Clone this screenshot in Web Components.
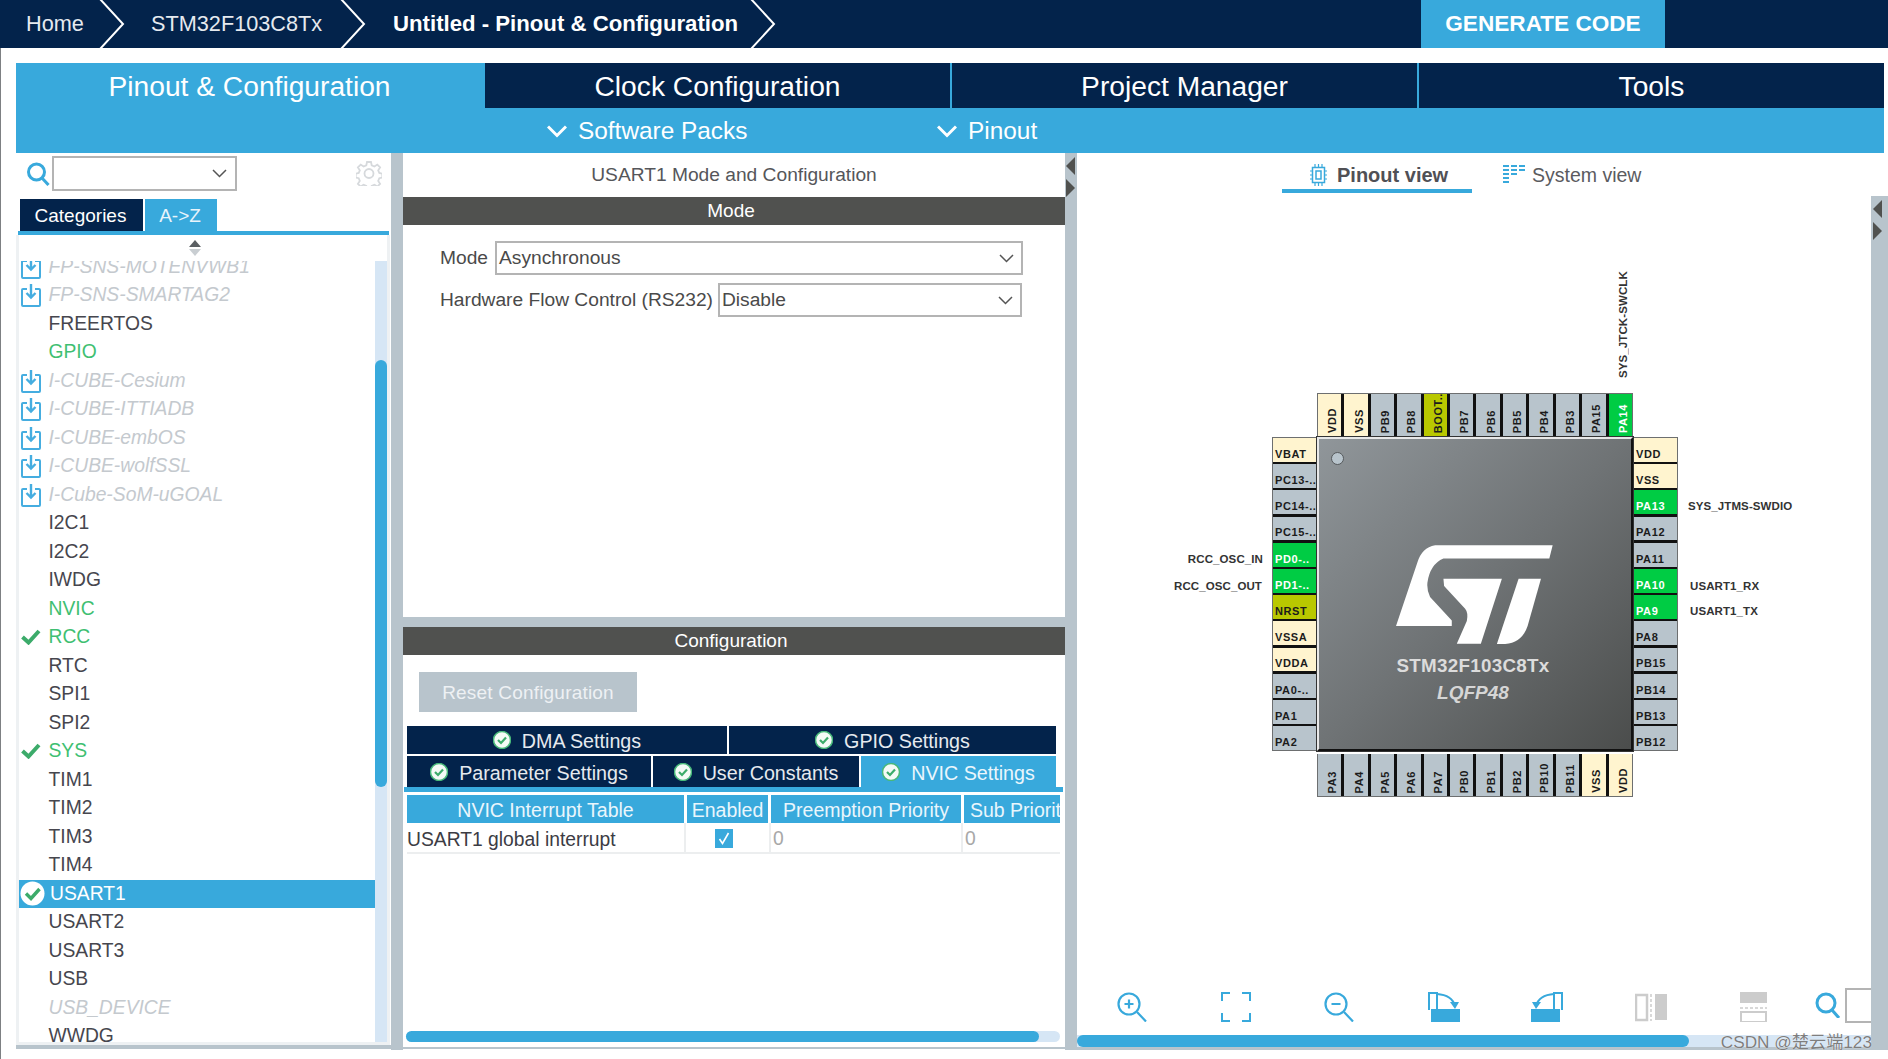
<!DOCTYPE html>
<html><head><meta charset="utf-8"><title>STM32CubeMX</title>
<style>
html,body{margin:0;padding:0;background:#fff;height:1059px;overflow:hidden;font-family:"Liberation Sans",Arial,sans-serif}
cube-app{display:block}
</style></head><body>
<cube-app></cube-app>
<script>
const BLUE='#38a9dc',NAVY='#03234b',GREY='#b8c4cc',DARK='#50514f';
function def(name,css,html){
  customElements.define(name,class extends HTMLElement{
    constructor(){super();const r=this.attachShadow({mode:'open'});
      const h=typeof html==='function'?html(this):html;
      r.innerHTML='<style>'+css+'</style>'+h;}
  });
}
const I={
 dl:`<svg width="20" height="24" viewBox="0 0 20 24" fill="none" stroke="#45ade0" stroke-width="2"><path d="M6 6H2a1 1 0 0 0-1 1v15a1 1 0 0 0 1 1h16a1 1 0 0 0 1-1V7a1 1 0 0 0-1-1h-4"/><path d="M10 1v13M5.500 10l4.500 4.500 4.500-4.500" stroke-width="2.400"/></svg>`,
 chk:`<svg width="20" height="16" viewBox="0 0 20 16" fill="none" stroke="#3cab6a" stroke-width="4"><path d="M1.500 8l6 5.500L18 2"/></svg>`,
 round:`<svg width="25" height="25" viewBox="0 0 25 25"><circle cx="12.500" cy="12.500" r="12" fill="#fff"/><path d="M6 12.500l5 5 8.500-9.500" fill="none" stroke="#3cab6a" stroke-width="3.400"/></svg>`,
 mini:`<svg width="18" height="18" viewBox="0 0 18 18"><circle cx="9" cy="9" r="8.500" fill="#f4faf6" stroke="#48b87a" stroke-width="1.500"/><path d="M5 9l3 3 5-5.500" fill="none" stroke="#3cab6a" stroke-width="2.200"/></svg>`,
 search:`<svg width="24" height="24" viewBox="0 0 24 24" fill="none" stroke="${BLUE}" stroke-width="3"><circle cx="10.500" cy="10" r="8"/><path d="M16 16l6.500 7"/></svg>`,
 gear:`<svg width="26" height="25" viewBox="0 0 26 25" fill="none" stroke="#d6d9dc" stroke-width="1.800"><circle cx="13" cy="12.500" r="4.500"/><path d="M11 1h4l.7 3.400 2.700 1.100 2.900-1.900 2.800 2.800-1.900 2.900 1.100 2.700 3 .7v3.800l-3 .7-1.100 2.700 1.900 2.900-2.800 2.800-2.900-1.900-2.700 1.100-.7 2.500h-4l-.7-2.500-2.700-1.100-2.900 1.900-2.800-2.800 1.900-2.900-1.100-2.700-3-.7v-3.800l3-.7 1.100-2.700-1.900-2.900 2.800-2.800 2.900 1.900 2.700-1.100z"/></svg>`,
 chev:`<svg width="20" height="13" viewBox="0 0 20 13" fill="none" stroke="#fff" stroke-width="3"><path d="M1 1.500l9 9 9-9"/></svg>`,
 dd:`<svg width="15" height="9" viewBox="0 0 15 9" fill="none" stroke="#555" stroke-width="1.500"><path d="M1 1l6.500 6.500L14 1"/></svg>`
};

def('cube-crumbs',`
:host{display:flex;height:48px;background:${NAVY};color:#e6eaef;font-size:21.700px;align-items:center;position:relative}
.c{position:relative;height:48px;display:flex;align-items:center;box-sizing:border-box}
svg{position:absolute;right:0;top:0}
.on{color:#fff;font-weight:bold;font-size:22.200px}
.gen{margin-left:auto;margin-right:223px;width:244px;height:48px;background:${BLUE};color:#fff;font-weight:bold;font-size:22.600px;display:flex;align-items:center;justify-content:center}
`,()=>{
 const ch=`<svg width="26" height="48" viewBox="0 0 26 48" fill="none" stroke="#fff" stroke-width="2"><path d="M1 -1L24 24 1 49"/></svg>`;
 return `<div class="c" style="width:125px;padding-left:26px">Home${ch}</div>
 <div class="c" style="width:241px;padding-left:26px">STM32F103C8Tx${ch}</div>
 <div class="c on" style="width:410px;padding-left:27px">Untitled - Pinout &amp; Configuration${ch}</div>
 <div class="gen">GENERATE CODE</div>`;});

def('cube-tabs',`
:host{display:block;margin:15px 4px 0 16px;background:${BLUE};height:90px;color:#fff}
.t{display:flex;height:45px;gap:2px;font-size:28.200px}
.t div{flex:1;display:flex;align-items:center;justify-content:center;background:${NAVY};padding-top:1px;box-sizing:border-box}
.t div.a{background:${BLUE};flex:none;width:467px}
.s{display:flex;height:45px;align-items:center;font-size:24.400px;padding:1px 0 0 531px;box-sizing:border-box}
.s span{display:flex;align-items:center;gap:11px}
`,`<div class="t"><div class="a">Pinout &amp; Configuration</div><div>Clock Configuration</div><div>Project Manager</div><div>Tools</div></div>
<div class="s"><span style="width:390px">${I.chev}Software Packs</span><span>${I.chev}Pinout</span></div>`);

def('ip-row',`
:host{display:flex;height:28.500px;align-items:center;position:relative;padding-left:29.500px;color:#46464e;font-size:19.300px;white-space:nowrap;flex:none}
:host([g]){color:#3fbf72}
:host([d]){color:#c4c9ce;font-style:italic}
:host([s]){background:${BLUE};color:#fff;padding-left:31px}
.i{position:absolute;left:2px;top:0;bottom:0;display:flex;align-items:center}
:host([s]) .i{left:1px}
`,e=>{const k=e.getAttribute('i');return (k?`<span class="i">${I[k]}</span>`:'')+'<slot></slot>';});

def('ip-list',`
:host{display:flex;flex-direction:column;width:375px;background:#fff}
.top{display:flex;height:46px;box-sizing:border-box;padding:3px 9px 0 10px}
.top .s{margin-top:6px}
.combo{margin-left:2px;width:185px;height:35px;box-sizing:border-box;border:2px solid #b4b4b4;display:flex;align-items:center;justify-content:flex-end;padding-right:8px}
.top .g{margin-left:auto;margin-top:5px}
.cat{display:flex;height:32px;margin-left:4px;gap:2px;color:#fff;font-size:19px}
.cat div{display:flex;align-items:center;justify-content:center;background:${NAVY};width:123px;padding:1px 2px 0 0;box-sizing:border-box}
.cat div+div{background:${BLUE};width:72px;color:#e8f4fb}
.line{margin-left:2px;width:371px;height:4px;background:${BLUE};flex:none}
.sort{height:26px;box-sizing:border-box;margin:0 1px 0 0;border-left:3px solid #eef1f3;border-right:3px solid #eef1f3;width:374px;display:flex;flex-direction:column;align-items:center;padding:5px 16px 0 0;gap:2px}
.sort i{display:block;width:0;height:0;border-left:6px solid transparent;border-right:6px solid transparent}
.sort i:first-child{border-bottom:7px solid #5a5f62}
.sort i:last-child{border-top:7px solid #c9ced2}
.body{display:flex;height:781px;width:374px;box-sizing:border-box;border-left:3px solid #eef1f3;border-right:3px solid #eef1f3}
.rows{flex:1;overflow:hidden;display:flex;flex-direction:column}
.inner{margin-top:-8.500px;display:flex;flex-direction:column}
.sb{width:12px;background:#d6e6f5;position:relative;display:flex;flex-direction:column;flex:none}
.sb b{display:block;margin-top:99px;height:427px;background:${BLUE};border-radius:6px}
.foot{height:3px;width:374px;background:#eef1f3}
.foot2{height:4px;background:${GREY};width:375px}
`,`<div class="top"><span class="s">${I.search}</span><div class="combo">${I.dd}</div><span class="g">${I.gear}</span></div>
<div class="cat"><div>Categories</div><div>A-&gt;Z</div></div>
<div class="line"></div>
<div class="sort"><i></i><i></i></div>
<div class="body"><div class="rows"><div class="inner"><slot></slot></div></div><div class="sb"><b></b></div></div>
<div class="foot"></div><div class="foot2"></div>`);

def('set-tab',`
:host{display:flex;align-items:center;justify-content:center;gap:11px;background:${NAVY};color:#e6eaef;font-size:19.700px;box-sizing:border-box;flex:none;padding:3px 0 0 0}
:host([a]){background:${BLUE};color:#eaf6fc}
svg{flex:none;margin-top:-3px}
`,`${I.mini}<slot></slot>`);

def('mode-panel',`
:host{display:flex;flex-direction:column;width:662px;height:897px;color:#4a4a4a;font-size:19.200px;background:#fff}
.title{height:44px;display:flex;align-items:center;justify-content:center;color:#55565a;font-size:19.200px}
.bar{height:28px;background:${DARK};color:#fff;display:flex;align-items:center;justify-content:center;font-size:19px;flex:none;box-sizing:border-box;padding:0 6px 0 0}
.upper{height:392px;padding:16px 0 0 37px;box-sizing:border-box}
.fr{display:flex;align-items:center;height:34px;margin-bottom:8px;white-space:nowrap}
.sel{margin-left:6px;height:34px;box-sizing:border-box;border:2px solid #b4b4b4;display:flex;align-items:center;justify-content:space-between;padding:0 7px 0 2px}
.split{height:10px;background:${GREY};flex:none}
.reset{margin:17px 0 0 16px;width:218px;height:40px;background:${GREY};color:#eef1f4;display:flex;align-items:center;justify-content:center;font-size:19px;letter-spacing:.2px;box-sizing:border-box;padding-top:2px}
.r1,.r2{display:flex;margin-left:4px;gap:2px}
.r1{margin-top:14px;height:28px}
.r2{margin-top:2px;height:31px}
.rule{height:5px;background:${BLUE};margin:0 2px 0 1px}
.head{display:flex;margin:3px 0 0 4px;height:28px;color:#eaf6fc;gap:3px;overflow:hidden;width:653px}
.head div{background:${BLUE};display:flex;align-items:center;justify-content:center;flex:none;white-space:nowrap;overflow:hidden;font-size:19.500px;box-sizing:border-box;padding-top:2px}
.row{display:flex;margin:0 0 0 4px;width:653px;height:31px;border-bottom:2px solid #eceeef;box-sizing:border-box;color:#3c3c44;font-size:19.300px;align-items:stretch}
.row div{flex:none;display:flex;align-items:center;border-right:2px solid #eceeef;box-sizing:border-box;color:#a8a8a8;padding:3px 0 0 2px}
.row div:first-child{color:#3c3c44;padding:4px 0 0 0}
.row div:last-child{border:0}
.cb{width:18px;height:19px;background:${BLUE};display:flex;align-items:center;justify-content:center;margin:-2px 0 0 27px}
.sc{margin:177px 0 0 3px;width:654px;height:11px;background:#d6e6f5;border-radius:6px}
.sc b{display:block;width:633px;height:11px;background:${BLUE};border-radius:6px}
.end{margin-top:5px;height:2px;background:${GREY}}
`,`<div class="title">USART1 Mode and Configuration</div>
<div class="bar">Mode</div>
<div class="upper">
 <div class="fr">Mode<div class="sel" style="width:528px;margin-left:7px"><span>Asynchronous</span>${I.dd}</div></div>
 <div class="fr">Hardware Flow Control (RS232)<div class="sel" style="width:304px;margin-left:5px"><span>Disable</span>${I.dd}</div></div>
</div>
<div class="split"></div>
<div class="bar">Configuration</div>
<div class="reset">Reset Configuration</div>
<div class="r1"><set-tab style="width:320px">DMA Settings</set-tab><set-tab style="width:327px">GPIO Settings</set-tab></div>
<div class="r2"><set-tab style="width:244px">Parameter Settings</set-tab><set-tab style="width:206px">User Constants</set-tab><set-tab a style="width:195px">NVIC Settings</set-tab></div>
<div class="rule"></div>
<div class="head"><div style="width:277px">NVIC Interrupt Table</div><div style="width:81px">Enabled</div><div style="width:190px">Preemption Priority</div><div style="width:96px;justify-content:flex-start;padding-left:6px">Sub Priorit</div></div>
<div class="row"><div style="width:279px">USART1 global interrupt</div><div style="width:85px"><span class="cb"><svg width="12" height="13" viewBox="0 0 12 13" fill="none" stroke="#fff" stroke-width="1.600"><path d="M1.500 7l3 4.500L10.500 1"/></svg></span></div><div style="width:192px">0</div><div style="width:96px">0</div></div>
<div class="sc"><b></b></div>
<div class="end"></div>`);

def('cube-split',`
:host{display:flex;flex-direction:column;background:${GREY};width:12px;box-sizing:border-box;padding:4px 0 0 1px;gap:4px;flex:none}
i{display:block;width:0;height:0;border-top:9px solid transparent;border-bottom:9px solid transparent}
i.l{border-right:9px solid #50514f}
i.r{border-left:9px solid #50514f}
:host([plain]) i{display:none}
`,`<i class="l"></i><i class="r"></i>`);

const COL={g:'#b8c4cc',c:'#fff4cf',n:'#00cc44',o:'#b9c800'};
def('chip-pin',`
:host{display:flex;box-sizing:border-box;font:bold 11px "Liberation Sans",Arial,sans-serif;letter-spacing:.6px;color:#1c1c1c;overflow:hidden;white-space:nowrap;min-width:0;min-height:0}
:host([k=g]){background:${COL.g}}
:host([k=c]){background:${COL.c}}
:host([k=n]){background:${COL.n};color:#fff}
:host([k=o]){background:${COL.o}}
:host([v]){writing-mode:vertical-rl;justify-content:flex-end;align-items:center}
:host([v]) span{transform:rotate(180deg);padding:3px 5px 0 0}
:host(:not([v])){align-items:flex-end;padding:0 0 2px 2px}
`,`<span><slot></slot></span>`);

def('chip-view',`
:host{display:block;width:405px;height:403px;position:relative;font-family:"Liberation Sans",Arial,sans-serif}
.g{display:grid;grid-template-columns:45px 316px 45px;grid-template-rows:45px 314px 45px;width:406px;height:404px}
.h{display:grid;grid-template-columns:repeat(12,1fr);gap:3px;background:#111;border:1px solid #6d6f70;box-sizing:border-box}
.h.t{border-bottom:0;height:43px;margin-top:1px}
.h.b{border-top:0;margin-top:3px;height:43px}
.s{display:grid;grid-template-rows:repeat(12,1fr);gap:2.400px;background:#111;border:1px solid #6d6f70;box-sizing:border-box;height:314px}
.chip{background:linear-gradient(135deg,#90969a 0%,#6f7375 50%,#4b4d4c 100%);box-sizing:border-box;border:2px solid #111;border-top:2px solid #e8e8e8;border-left:2px solid #e8e8e8;position:relative;display:flex;flex-direction:column;align-items:center;color:#dcdcdc;outline:1px solid #333}
.dot{position:absolute;left:12px;top:13px;width:13px;height:13px;box-sizing:border-box;border-radius:50%;background:#b8c4cc;border:1.500px solid #55595c}
.chip svg{margin-top:106px;flex:none;margin-left:-1px}
.name{font-size:18.800px;font-weight:bold;margin-top:9px;margin-left:-4px;letter-spacing:.3px;line-height:24px}
.pk{font-size:19px;font-style:italic;font-weight:bold;margin-left:-4px;line-height:30px;color:#d6d6d6}
.l{position:absolute;font-size:11.500px;font-weight:bold;letter-spacing:.1px;color:#333;white-space:nowrap;line-height:14px}
`,()=>{
 const pin=(t,k,v)=>`<chip-pin k="${k}"${v?' v':''}>${t}</chip-pin>`;
 const list=(a,v)=>a.map(([t,k])=>pin(t,k,v)).join('');
 const top=[['VDD','c'],['VSS','c'],['PB9','g'],['PB8','g'],['BOOT..','o'],['PB7','g'],['PB6','g'],['PB5','g'],['PB4','g'],['PB3','g'],['PA15','g'],['PA14','n']];
 const bot=[['PA3','g'],['PA4','g'],['PA5','g'],['PA6','g'],['PA7','g'],['PB0','g'],['PB1','g'],['PB2','g'],['PB10','g'],['PB11','g'],['VSS','c'],['VDD','c']];
 const lef=[['VBAT','c'],['PC13-..','g'],['PC14-..','g'],['PC15-..','g'],['PD0-..','n'],['PD1-..','n'],['NRST','o'],['VSSA','c'],['VDDA','c'],['PA0-..','g'],['PA1','g'],['PA2','g']];
 const rig=[['VDD','c'],['VSS','c'],['PA13','n'],['PA12','g'],['PA11','g'],['PA10','n'],['PA9','n'],['PA8','g'],['PB15','g'],['PB14','g'],['PB13','g'],['PB12','g']];
 return `<div class="g"><div></div><div class="h t">${list(top,1)}</div><div></div>
 <div class="s">${list(lef)}</div>
 <div class="chip"><span class="dot"></span>
  <svg width="157" height="100" viewBox="738 13 470 298" fill="#fff"><path d="M738 255H905V238L840 168Q830 150 832 125Q840 70 880 53H1197L1207 13H855Q815 20 802 65Z"/><path d="M880 113H1055L992 308H920L950 240Q955 215 945 203L882 135Z"/><path d="M1105 113H1172L1132 255Q1115 305 1065 309H1040Z"/></svg>
  <div class="name">STM32F103C8Tx</div><div class="pk">LQFP48</div></div>
 <div class="s">${list(rig)}</div>
 <div></div><div class="h b">${list(bot,1)}</div><div></div></div>
 <span class="l" style="right:414px;top:160px">RCC_OSC_IN</span>
 <span class="l" style="right:415px;top:187px">RCC_OSC_OUT</span>
 <span class="l" style="left:416px;top:107px">SYS_JTMS-SWDIO</span>
 <span class="l" style="left:418px;top:187px">USART1_RX</span>
 <span class="l" style="left:418px;top:212px">USART1_TX</span>
 <span class="l" style="left:344px;top:-120px;height:106px;writing-mode:vertical-rl;transform:rotate(180deg);text-align:left">SYS_JTCK-SWCLK</span>`;
});

def('pinout-panel',`
:host{display:flex;flex-direction:column;width:794px;height:897px;position:relative;background:#fff}
.tabs{height:40px;display:flex;flex:none;font-size:19.500px;color:#5b5b5f;padding-left:205px}
.tab{display:flex;align-items:center;height:36px;box-sizing:border-box;padding-top:8px;gap:11px}
.tab.a{width:190px;height:40px;padding-left:27px;gap:9px;border-bottom:4px solid ${BLUE};font-weight:bold;color:#505055;font-size:20px}
.tab.b{margin-left:31px;gap:7px}
.canvas{flex:1;position:relative}
chip-view{position:absolute;left:195px;top:199px}
.tools{display:flex;height:47px;padding:4px 0 0 40px;align-items:flex-start;flex:none;box-sizing:border-box}
.tools svg{flex:none;display:block}
.box{width:27px;height:35px;box-sizing:border-box;border:2px solid #b4b4b4;border-right:0;margin:-4px 0 0 5px}
.sb{height:12px;background:#d6e6f5;flex:none}
.sb b{display:block;height:12px;width:612px;background:${BLUE};border-radius:6px}
.end{height:3px;background:${GREY};flex:none}
.wm{position:absolute;right:-1px;bottom:-3px;color:#7e7e7e;font:17.200px "Liberation Sans","Noto Sans CJK SC",sans-serif;text-shadow:0 0 1px #fff;white-space:nowrap}
`,()=>{const B=BLUE;
 return `<div class="tabs">
 <div class="tab a"><svg width="19" height="22" viewBox="0 0 17 22" fill="none" stroke="${B}"><rect x="2.500" y="3.500" width="12" height="15" stroke-width="1.500"/><rect x="6" y="7" width="5" height="8" stroke-width="1.500"/><path d="M5 0v3M8.500 0v3M12 0v3M5 19v3M8.500 19v3M12 19v3M0 7h2M0 11h2M0 15h2M15 7h2M15 11h2M15 15h2" stroke-width="1.200"/></svg>Pinout view</div>
 <div class="tab b"><svg width="22" height="20" viewBox="0 0 22 20" fill="none" stroke="${B}" stroke-width="2"><path d="M0 1h6M0 5h6M0 9h6M0 13h6M0 17h6M8 1h6M8 5h6M8 9h6M16 1h6M16 5h6"/></svg>System view</div></div>
 <div class="canvas"><chip-view></chip-view></div>
 <div class="tools">
 <svg width="30" height="30" viewBox="0 0 30 30" fill="none" stroke="${B}" stroke-width="2.200" style="margin-right:74px"><circle cx="12" cy="12" r="10.500"/><path d="M20 20l9 9.500M7.500 12h9M12 7.500v9"/></svg>
 <svg width="30" height="30" viewBox="0 0 30 30" fill="none" stroke="${B}" stroke-width="2" style="margin-right:73px"><path d="M9 1H1v8M21 1h8v8M9 29H1v-8M21 29h8v-8"/></svg>
 <svg width="30" height="30" viewBox="0 0 30 30" fill="none" stroke="${B}" stroke-width="2.200" style="margin-right:74px"><circle cx="12" cy="12" r="10.500"/><path d="M20 20l9 9.500M7.500 12h9"/></svg>
 <svg width="32" height="30" viewBox="0 0 32 30" fill="none" stroke="${B}" stroke-width="2" style="margin-right:71px"><path d="M1 18V1h8v17"/><rect x="3" y="17" width="29" height="13" fill="${B}" stroke="none"/><path d="M9 2Q24 3 27 14"/><path d="M22 10l5 7 4-7z" fill="${B}" stroke="none"/></svg>
 <svg width="32" height="30" viewBox="0 0 32 30" fill="none" stroke="${B}" stroke-width="2" style="margin-right:72px"><path d="M31 18V1h-8v17"/><rect x="0" y="17" width="29" height="13" fill="${B}" stroke="none"/><path d="M23 2Q8 3 5 14"/><path d="M10 10l-5 7-4-7z" fill="${B}" stroke="none"/></svg>
 <svg width="32" height="30" viewBox="0 0 32 30" style="margin-right:72px"><rect x="1" y="3" width="11" height="25" fill="#fff" stroke="#ccc" stroke-width="2.500"/><path d="M16 2v27" stroke="#ccc" stroke-width="1.500" stroke-dasharray="3 2"/><rect x="20" y="2" width="12" height="26" fill="#ccc"/></svg>
 <svg width="29" height="30" viewBox="0 0 29 30" style="margin-right:47px"><rect x="1" y="0" width="27" height="11" fill="#ccc"/><path d="M1 16h27" stroke="#ccc" stroke-width="1.500" stroke-dasharray="3 2"/><rect x="2" y="20" width="25" height="10" fill="#fff" stroke="#ccc" stroke-width="2"/></svg>
 <svg width="25" height="26" viewBox="0 0 25 26" fill="none" stroke="${B}" stroke-width="3"><circle cx="11" cy="11" r="9"/><path d="M17 18l7 8"/></svg>
 <div class="box"></div></div>
 <div class="sb"><b></b></div><div class="end"></div>
 <span class="wm">CSDN @楚云端123</span>`;});

const ROWS=[['FP-SNS-MOTENVWB1','d','dl'],['FP-SNS-SMARTAG2','d','dl'],['FREERTOS'],['GPIO','g'],['I-CUBE-Cesium','d','dl'],['I-CUBE-ITTIADB','d','dl'],['I-CUBE-embOS','d','dl'],['I-CUBE-wolfSSL','d','dl'],['I-Cube-SoM-uGOAL','d','dl'],['I2C1'],['I2C2'],['IWDG'],['NVIC','g'],['RCC','g','chk'],['RTC'],['SPI1'],['SPI2'],['SYS','g','chk'],['TIM1'],['TIM2'],['TIM3'],['TIM4'],['USART1','s','round'],['USART2'],['USART3'],['USB'],['USB_DEVICE','d'],['WWDG']];

def('cube-app',`
:host{display:block;width:1888px;height:1059px;position:relative;overflow:hidden;background:#fff}
.main{display:flex;margin-left:16px;height:897px;align-items:stretch}
.rs{margin-top:43px;width:17px;height:854px;padding-left:2px}
.edge{position:absolute;left:0;top:48px;width:1px;height:1011px;background:#7d8083}
`,`<cube-crumbs></cube-crumbs><cube-tabs></cube-tabs>
<div class="main">
<ip-list>${ROWS.map(r=>`<ip-row${r[1]?' '+r[1]:''}${r[2]?` i="${r[2]}"`:''}>${r[0]}</ip-row>`).join('')}</ip-list>
<cube-split plain></cube-split><mode-panel></mode-panel><cube-split></cube-split><pinout-panel></pinout-panel><cube-split class="rs"></cube-split>
</div><div class="edge"></div>`);
</script>
</body></html>
